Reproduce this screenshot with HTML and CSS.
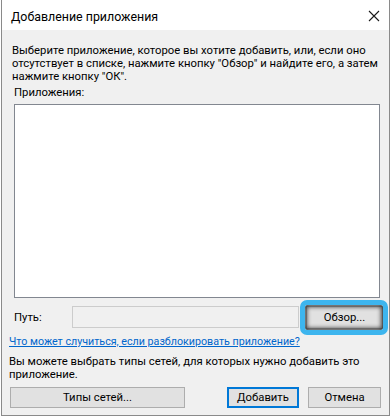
FILE: index.html
```html
<!DOCTYPE html>
<html lang="ru">
<head>
<meta charset="utf-8">
<title>Добавление приложения</title>
<link rel="stylesheet" href="styles.css">
</head>
<body>
<div class="window">
  <div class="titlebar">
    <span class="title">Добавление приложения</span>
    <svg class="close" width="12" height="12" viewBox="0 0 12 12"><path d="M1 1 L11 11 M11 1 L1 11" stroke="#1a1a1a" stroke-width="1.1" fill="none"/></svg>
  </div>
  <div class="content">
    <p class="intro">Выберите приложение, которое вы хотите добавить, или, если оно<br>отсутствует в списке, нажмите кнопку "Обзор" и найдите его, а затем<br>нажмите кнопку "ОК".</p>
    <div class="label">Приложения:</div>
    <div class="listbox"></div>
    <div class="path-row">
      <span class="path-label">Путь:</span>
      <div class="path-input"></div>
      <div class="browse-wrap">
        <button class="btn browse">Обзор...</button>
        <span class="highlight"></span>
      </div>
    </div>
    <a class="link" href="#">Что может случиться, если разблокировать приложение?</a>
    <p class="note">Вы можете выбрать типы сетей, для которых нужно добавить это<br>приложение.</p>
    <div class="buttons">
      <button class="btn types">Типы сетей...</button>
      <button class="btn add default">Добавить</button>
      <button class="btn cancel">Отмена</button>
    </div>
  </div>
</div>
</body>
</html>
```
FILE: styles.css
```css
* { box-sizing: border-box; }
html, body { margin: 0; padding: 0; background: #ffffff; }
body {
  font-family: Roboto, "Noto Sans", sans-serif;
  font-size: 11.3px;
  color: #000;
}
.window {
  margin-left: 1px;
  width: 389px;
  height: 416px;
  border: 1px solid #8a8a8a;
  border-top: none;
  display: flex;
  flex-direction: column;
  background: #f0f0f0;
}
.titlebar {
  height: 30px;
  background: #fff;
  display: flex;
  align-items: center;
  padding-left: 9px;
  padding-right: 9px;
  justify-content: space-between;
}
.title { font-size: 12.4px; line-height: 15px; margin-top: 2px; color: #000; }
.close { margin-top: 2px; }
.content {
  flex: 1;
  display: flex;
  flex-direction: column;
}
.intro {
  margin: 14px 0 0 10px;
  line-height: 13.2px;
  white-space: nowrap;
}
.label {
  margin: 2px 0 0 12px;
  line-height: 13.2px;
}
.listbox {
  margin: 5px 0 0 12px;
  width: 366px;
  height: 194px;
  background: #fff;
  border: 1px solid #828790;
}
.path-row {
  display: flex;
  align-items: center;
  margin-top: 8px;
  height: 23px;
}
.path-label { margin-left: 12px; width: 58px; line-height: 13px; }
.path-input {
  width: 227px;
  height: 22px;
  background: #f0f0f0;
  border: 1px solid #cccccc;
  align-self: flex-start;
}
.browse-wrap {
  position: relative;
  margin-left: 7px;
  align-self: flex-start;
}
.btn {
  font-family: inherit;
  font-size: 11.3px;
  color: #000;
  background: #e1e1e1;
  border: 1px solid #adadad;
  padding: 0;
  margin: 0;
  line-height: 13px;
}
.browse { width: 77px; height: 23px; display: block; }
.highlight {
  position: absolute;
  left: -6px; top: -6px; right: -5px; bottom: -6px;
  border: 5px solid #3db5ee;
  border-radius: 7px;
  box-shadow: inset 0 0 4px 2px rgba(30,30,30,0.8);
  pointer-events: none;
}
.link {
  margin: 6px 0 0 7px;
  color: #0066cc;
  text-decoration: underline;
  line-height: 13.2px;
  font-size: 10.7px;
  align-self: flex-start;
}
.note {
  margin: 7px 0 0 7px;
  line-height: 13.2px;
  white-space: nowrap;
}
.buttons {
  display: flex;
  margin-top: 6px;
  padding-left: 8px;
}
.buttons .btn { height: 21px; }
.types { width: 175px; }
.add { width: 72px; margin-left: auto; }
.cancel { width: 73px; margin-left: 9px; margin-right: 8px; }
.default { border: 2px solid #0078d7; }
```
